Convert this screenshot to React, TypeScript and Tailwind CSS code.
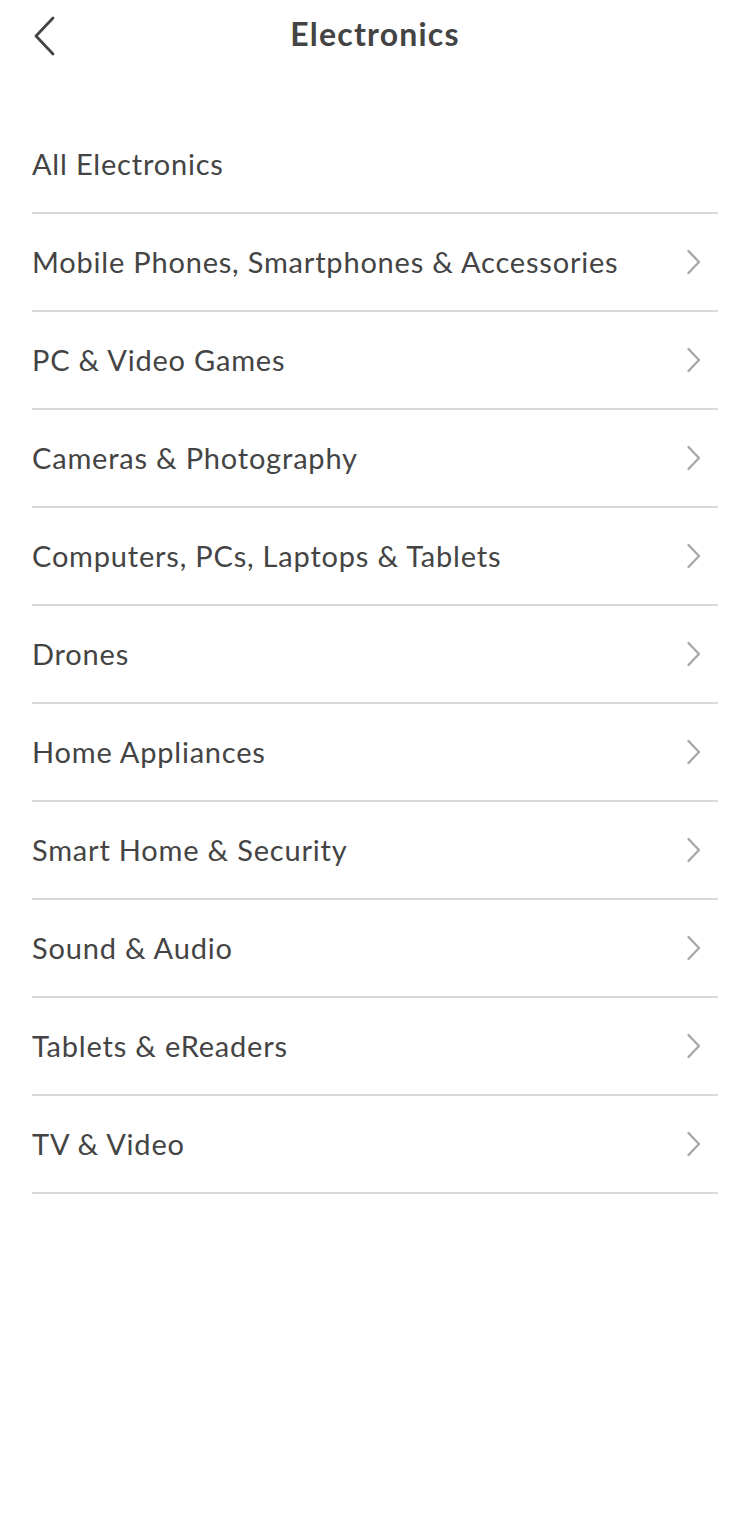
import React from 'react';

const categories: { name: string; chevron: boolean }[] = [
  { name: 'All Electronics', chevron: false },
  { name: 'Mobile Phones, Smartphones & Accessories', chevron: true },
  { name: 'PC & Video Games', chevron: true },
  { name: 'Cameras & Photography', chevron: true },
  { name: 'Computers, PCs, Laptops & Tablets', chevron: true },
  { name: 'Drones', chevron: true },
  { name: 'Home Appliances', chevron: true },
  { name: 'Smart Home & Security', chevron: true },
  { name: 'Sound & Audio', chevron: true },
  { name: 'Tablets & eReaders', chevron: true },
  { name: 'TV & Video', chevron: true },
];

const ChevronRight = () => (
  <svg width="16" height="26" viewBox="0 0 16 26" fill="none" className="shrink-0">
    <path d="M2.5 2 L13 13 L2.5 24" stroke="#a8a8a8" strokeWidth="2.4" strokeLinecap="round" strokeLinejoin="round" />
  </svg>
);

const ChevronLeft = () => (
  <svg width="26" height="40" viewBox="0 0 26 40" fill="none">
    <path d="M22 2 L5 20 L22 38" stroke="#444444" strokeWidth="2.8" strokeLinecap="round" strokeLinejoin="round" />
  </svg>
);

export default function App() {
  return (
    <div className="w-[750px] min-h-[1540px] bg-white text-[#444444] font-['Lato',sans-serif]">
      {/* Header */}
      <div className="relative h-[70px] flex items-center justify-center">
        <button className="absolute left-[31px] top-[16px]">
          <ChevronLeft />
        </button>
        <h1 className="text-[32px] font-bold tracking-[1.2px] -mt-[2px]">Electronics</h1>
      </div>

      {/* List */}
      <div className="mt-[46px] px-[32px]">
        {categories.map((c) => (
          <div
            key={c.name}
            className="h-[98px] flex items-center justify-between border-b-2 border-[#dadada] pr-[16px]"
          >
            <span className="text-[29px] tracking-[0.8px]">{c.name}</span>
            {c.chevron && <ChevronRight />}
          </div>
        ))}
      </div>
    </div>
  );
}
